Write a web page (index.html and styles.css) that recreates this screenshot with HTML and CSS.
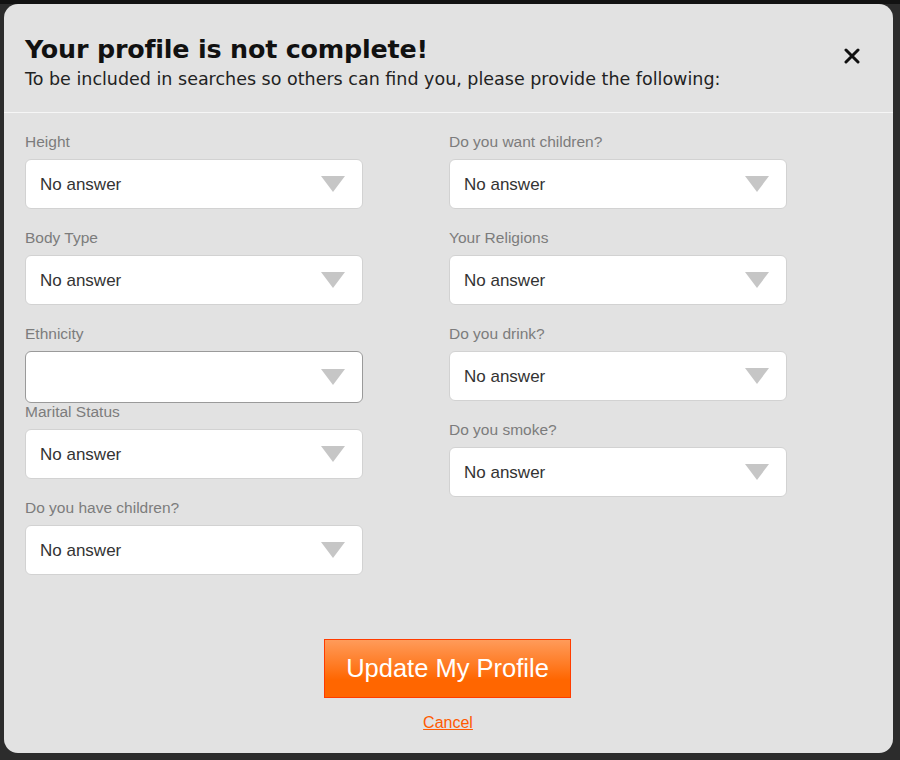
FILE: index.html
```html
<!DOCTYPE html>
<html lang="en">
<head>
<meta charset="utf-8">
<title>Your profile is not complete!</title>
<link rel="stylesheet" href="styles.css">
</head>
<body>
<div class="backdrop">
  <div class="modal">
    <button class="close" aria-label="Close">
      <svg width="16" height="16" viewBox="0 0 16 16"><path d="M2 2 L14 14 M14 2 L2 14" stroke="#111" stroke-width="3" stroke-linecap="round"/></svg>
    </button>
    <div class="header">
      <h1 class="title">Your profile is not complete!</h1>
      <p class="subtitle">To be included in searches so others can find you, please provide the following:</p>
    </div>
    <form class="form">
      <div class="columns">
        <div class="col">
          <div class="field">
            <label class="label">Height</label>
            <div class="select"><select><option>No answer</option></select></div>
          </div>
          <div class="field">
            <label class="label">Body Type</label>
            <div class="select"><select><option>No answer</option></select></div>
          </div>
          <div class="field field-tight">
            <label class="label">Ethnicity</label>
            <div class="select select-focus"><select><option></option></select></div>
          </div>
          <div class="field">
            <label class="label">Marital Status</label>
            <div class="select"><select><option>No answer</option></select></div>
          </div>
          <div class="field">
            <label class="label">Do you have children?</label>
            <div class="select"><select><option>No answer</option></select></div>
          </div>
        </div>
        <div class="col">
          <div class="field">
            <label class="label">Do you want children?</label>
            <div class="select"><select><option>No answer</option></select></div>
          </div>
          <div class="field">
            <label class="label">Your Religions</label>
            <div class="select"><select><option>No answer</option></select></div>
          </div>
          <div class="field">
            <label class="label">Do you drink?</label>
            <div class="select"><select><option>No answer</option></select></div>
          </div>
          <div class="field">
            <label class="label">Do you smoke?</label>
            <div class="select"><select><option>No answer</option></select></div>
          </div>
        </div>
      </div>
      <div class="footer">
        <button type="button" class="update">Update My Profile</button>
        <a href="#" class="cancel">Cancel</a>
      </div>
    </form>
  </div>
</div>
</body>
</html>
```

FILE: styles.css
```css
html, body {
  margin: 0;
  padding: 0;
}
body {
  width: 900px;
  height: 760px;
  overflow: hidden;
  background: #313131;
  font-family: "Liberation Sans", Arial, sans-serif;
}
.backdrop {
  padding: 4px 7px 7px 4px;
  background: linear-gradient(#121212 0, #121212 4px, #2c2c2c 4px);
  height: 749px;
}
.modal {
  position: relative;
  width: 889px;
  height: 749px;
  background: #e2e2e2;
  border-radius: 14px;
  box-sizing: border-box;
}
.close {
  position: absolute;
  top: 44px;
  left: 840px;
  width: 16px;
  height: 16px;
  padding: 0;
  border: 0;
  background: none;
  display: block;
}
.close svg { display: block; }
.header {
  padding: 29px 20px 0 21px;
  height: 109px;
  box-sizing: border-box;
  border-bottom: 1px solid #f6f6f6;
}
.title {
  margin: 0;
  font-size: 25.4px;
  line-height: 32px;
  font-weight: bold;
  color: #111;
  font-family: "DejaVu Sans", "Liberation Sans", sans-serif;
  letter-spacing: -0.2px;
}
.subtitle {
  margin: 4px 0 0;
  font-size: 17.5px;
  line-height: 20px;
  color: #222;
  font-family: "DejaVu Sans", "Liberation Sans", sans-serif;
  letter-spacing: 0;
}
.form {
  padding: 21px 0 0 21px;
}
.columns {
  display: flex;
  gap: 86px;
  height: 505px;
}
.col {
  width: 338px;
  display: flex;
  flex-direction: column;
}
.field {
  display: flex;
  flex-direction: column;
  margin-bottom: 21px;
}
.field-tight {
  margin-bottom: 1px;
}
.label {
  font-size: 15.5px;
  line-height: 16px;
  color: #7c7c7c;
  margin-bottom: 9px;
}
.select {
  position: relative;
  height: 50px;
}
.select select {
  appearance: none;
  -webkit-appearance: none;
  width: 100%;
  height: 100%;
  box-sizing: border-box;
  border: 1px solid #d2d2d2;
  border-radius: 6px;
  background: #fff;
  padding: 0 0 0 14px;
  font-family: "Liberation Sans", Arial, sans-serif;
  font-size: 17px;
  color: #333;
  outline: none;
}
.select-focus {
  height: 52px;
}
.select-focus select {
  border: 1px solid #9a9a9a;
}
.select::after {
  content: "";
  position: absolute;
  right: 18px;
  top: 50%;
  margin-top: -8px;
  border-left: 12px solid transparent;
  border-right: 12px solid transparent;
  border-top: 16px solid #c6c6c6;
  pointer-events: none;
}
.footer {
  display: flex;
  flex-direction: column;
  align-items: center;
  margin-left: -21px;
  box-sizing: border-box;
  width: 889px;
}
.update {
  width: 247px;
  height: 59px;
  border: 1px solid #ff3c00;
  background: linear-gradient(#ff9b5a 0%, #ff7a22 45%, #ff6600 70%, #ff6600 100%);
  color: #fff;
  font-family: "Liberation Sans", Arial, sans-serif;
  font-size: 25.5px;
  padding: 0;
  margin-left: -2px;
}
.cancel {
  margin-top: 16px;
  font-size: 16px;
  line-height: 18px;
  color: #ff5a00;
  text-decoration: underline;
  margin-left: -1px;
}
```
